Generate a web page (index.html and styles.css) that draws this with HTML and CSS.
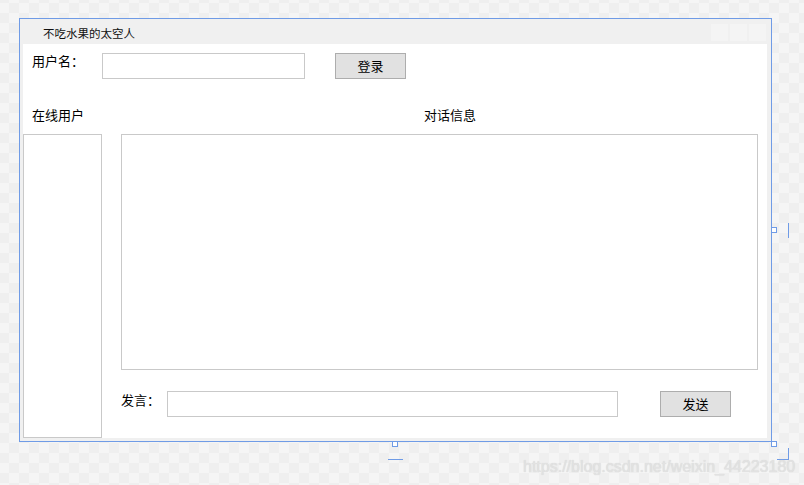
FILE: index.html
```html
<!DOCTYPE html>
<html lang="zh-CN">
<head>
<meta charset="utf-8">
<title>不吃水果的太空人</title>
<link rel="stylesheet" href="styles.css">
</head>
<body>
<div class="stage">
  <div class="window">
    <div class="titlebar">
      <span class="title">不吃水果的太空人</span>
      <div class="controls">
        <span class="ctl"></span>
        <span class="ctl"></span>
        <span class="ctl"></span>
      </div>
    </div>
    <div class="content">
      <div class="login-row">
        <span class="label user-label">用户名：</span>
        <div class="textbox user-box"></div>
        <div class="btn login-btn">登录</div>
      </div>
      <div class="main">
        <div class="head online-head">在线用户</div>
        <div class="head chat-head">对话信息</div>
        <div class="listbox"></div>
        <div class="chat-col">
          <div class="chatbox"></div>
          <div class="send-row">
            <span class="label send-label">发言：</span>
            <div class="textbox send-box"></div>
            <div class="btn send-btn">发送</div>
          </div>
        </div>
      </div>
    </div>
  </div>

  <span class="handle h-right"></span>
  <span class="handle h-bottom"></span>
  <span class="handle h-corner"></span>
  <span class="mark m-right"></span>
  <span class="mark m-bottom"></span>
  <span class="mark m-corner-v"></span>
  <span class="mark m-corner-h"></span>

  <div class="watermark">https://blog.csdn.net/weixin_44223180</div>
</div>
</body>
</html>
```

FILE: styles.css
```css
* {
  box-sizing: border-box;
}

html, body {
  margin: 0;
  padding: 0;
}

body {
  font-family: "Noto Sans CJK SC", "Microsoft YaHei", "Noto Sans", sans-serif;
  color: #000;
  background: #f4f4f4;
}

.stage {
  position: relative;
  width: 804px;
  height: 485px;
  overflow: hidden;
  padding-top: 18px;
  padding-left: 19px;
  background-color: #f5f5f5;
  background-image: conic-gradient(#f5f5f5 25%, #efefef 0 50%, #f5f5f5 0 75%, #efefef 0);
  background-size: 20px 20px;
  background-position: 9px 3px;
}

.window {
  width: 753px;
  height: 424px;
  border: 1px solid #6f9be6;
  background: #f0f0f0;
  display: flex;
  flex-direction: column;
}

.titlebar {
  height: 25px;
  display: flex;
  align-items: center;
  justify-content: space-between;
  padding-left: 23px;
  padding-right: 5px;
}

.title {
  font-size: 11.5px;
  line-height: 14px;
  padding-top: 2px;
  color: #111;
}

.controls {
  display: flex;
  gap: 2px;
  padding-top: 1px;
}

.ctl {
  width: 17px;
  height: 17px;
  background: #f4f4f4;
}

.content {
  background: #fff;
  height: 394px;
  margin: 0 4px 0 3px;
  display: flex;
  flex-direction: column;
}

.label {
  font-size: 13px;
  white-space: nowrap;
}

.textbox {
  height: 26px;
  border: 1px solid #c9c9c9;
  background: #fff;
}

.btn {
  width: 71px;
  height: 26px;
  border: 1px solid #adadad;
  background: #e1e1e1;
  font-size: 13px;
  line-height: 24px;
  text-align: center;
}

.login-row {
  display: flex;
  align-items: flex-start;
  margin-top: 9px;
  padding-left: 9px;
  height: 26px;
}

.user-label {
  width: 70px;
  line-height: 16px;
}

.user-box {
  width: 203px;
}

.login-btn {
  margin-left: 30px;
}

.main {
  margin-top: 27px;
  flex: 1;
  display: grid;
  grid-template-columns: 79px 637px;
  grid-template-rows: 28px 1fr;
  column-gap: 19px;
}

.head {
  font-size: 13px;
  line-height: 18px;
  white-space: nowrap;
}

.online-head {
  padding-left: 9px;
}

.chat-head {
  padding-left: 303px;
}

.listbox {
  border: 1px solid #c9c9c9;
  height: 304px;
}

.chat-col {
  display: flex;
  flex-direction: column;
}

.chatbox {
  height: 236px;
  border: 1px solid #c9c9c9;
}

.send-row {
  display: flex;
  align-items: flex-start;
  margin-top: 21px;
  height: 26px;
}

.send-label {
  width: 46px;
  line-height: 18px;
}

.send-box {
  width: 451px;
}

.send-btn {
  margin-left: 42px;
}

/* selection handles of the designer surface */
.handle {
  position: absolute;
  width: 6px;
  height: 6px;
  border: 1px solid #6f9be6;
  background: #fff;
}

.h-right {
  left: 771px;
  top: 227px;
}

.h-bottom {
  left: 392px;
  top: 441px;
}

.h-corner {
  left: 771px;
  top: 441px;
}

.mark {
  position: absolute;
  background: #6f9be6;
}

.m-right {
  left: 788px;
  top: 223px;
  width: 1px;
  height: 15px;
}

.m-bottom {
  left: 388px;
  top: 459px;
  width: 15px;
  height: 1px;
}

.m-corner-v {
  left: 788px;
  top: 448px;
  width: 1px;
  height: 12px;
}

.m-corner-h {
  left: 777px;
  top: 459px;
  width: 12px;
  height: 1px;
}

.watermark {
  position: absolute;
  left: 523px;
  top: 458px;
  font-family: "Liberation Sans", Arial, sans-serif;
  font-size: 16px;
  line-height: 18px;
  color: #e2e2e2;
  text-shadow: 0 0 1px #d0d0d0;
  white-space: nowrap;
}
```
